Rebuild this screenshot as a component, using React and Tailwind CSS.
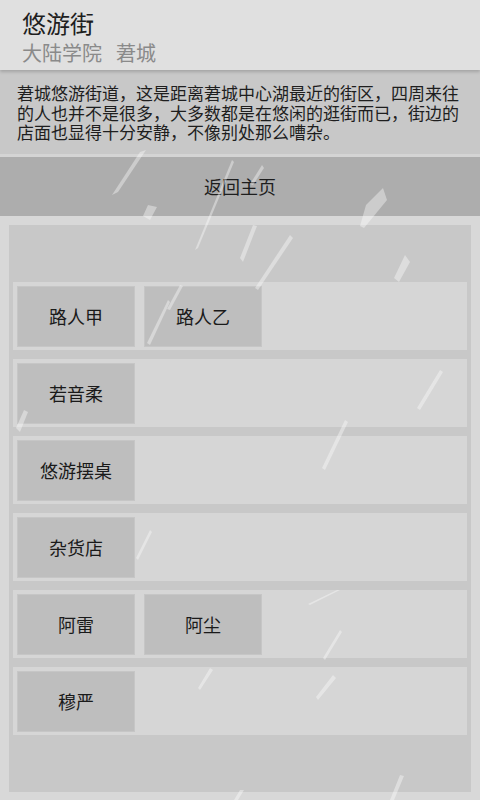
import React from "react";

const FONT = { fontFamily: '"Noto Sans CJK SC", "Noto Sans", sans-serif' };

const rows = [
  ["路人甲", "路人乙"],
  ["若音柔"],
  ["悠游摆桌"],
  ["杂货店"],
  ["阿雷", "阿尘"],
  ["穆严"],
];

const desc = [
  "莙城悠游街道，这是距离莙城中心湖最近的街区，四周来往",
  "的人也并不是很多，大多数都是在悠闲的逛街而已，街边的",
  "店面也显得十分安静，不像别处那么嘈杂。",
];

function Rain() {
  const streaks = [
    "M140,152 L146,150 L118,192 L112,195 Z",
    "M148,205 L157,207 L150,220 L143,216 Z",
    "M232,160 L234,162 L198,248 L195,250 Z",
    "M262,165 L264,168 L253,185 L250,184 Z",
    "M253,225 L257,226 L243,262 L240,258 Z",
    "M290,235 L293,238 L258,290 L255,288 Z",
    "M383,188 L387,200 L364,228 L360,226 L366,205 Z",
    "M405,255 L410,262 L399,282 L394,278 Z",
    "M364,0 L368,0 L358,8 L356,6 Z",
    "M475,8 L480,4 L480,14 L474,16 Z",
    "M168,300 L170,302 L150,345 L147,343 Z",
    "M180,285 L183,286 L170,310 L167,309 Z",
    "M440,370 L443,372 L420,410 L417,408 Z",
    "M345,420 L348,422 L325,470 L322,468 Z",
    "M24,410 L28,412 L20,432 L16,428 Z",
    "M150,530 L152,532 L138,560 L136,558 Z",
    "M337,590 L340,590 L310,605 L308,604 Z",
    "M340,630 L342,632 L325,660 L323,658 Z",
    "M333,675 L336,678 L318,700 L316,697 Z",
    "M210,668 L213,670 L200,690 L198,688 Z",
    "M240,790 L244,790 L238,800 L234,800 Z",
    "M400,775 L404,776 L394,800 L390,800 Z",
  ];
  return (
    <svg
      className="pointer-events-none absolute left-0 top-0"
      width="480"
      height="800"
      viewBox="0 0 480 800"
    >
      {streaks.map((d, i) => (
        <path key={i} d={d} fill="#ffffff" fillOpacity="0.38" />
      ))}
    </svg>
  );
}

export default function App() {
  return (
    <div
      className="relative flex h-[800px] w-[480px] flex-col overflow-hidden bg-[#d8d8d8]"
      style={FONT}
    >
      <div className="relative z-10 flex h-[70px] flex-col bg-[#e0e0e0] pl-[22px] pt-[9px] shadow-[0_2px_3px_rgba(0,0,0,0.18)]">
        <div className="text-[24px] leading-[28px] text-[#1e1e1e]">悠游街</div>
        <div className="mt-[4px] flex text-[20px] leading-[24px] text-[#8a8a8a]">
          <span>大陆学院</span>
          <span className="ml-[14px]">莙城</span>
        </div>
      </div>
      <div className="flex h-[84px] flex-col bg-[#c8c8c8] pl-[17px] pt-[13px] text-[17px] text-[#1e1e1e]">
        {desc.map((line) => (
          <div key={line} className="h-[19.5px] whitespace-nowrap leading-[19.5px]">
            {line}
          </div>
        ))}
      </div>
      <div className="h-[3px] bg-[#d4d4d4]" />
      <div className="flex h-[59px] items-center justify-center bg-[#adadad] text-[18px] text-[#1e1e1e]">
        返回主页
      </div>
      <div className="h-[9px] bg-[#d8d8d8]" />
      <div className="mx-[9px] flex h-[567px] flex-col justify-center gap-[9px] bg-[#c8c8c8] px-[4px]">
        {rows.map((row, i) => (
          <div
            key={i}
            className="flex h-[68px] gap-[9px] bg-[#d6d6d6] pb-[3px] pl-[4px] pt-[4px]"
          >
            {row.map((name) => (
              <div
                key={name}
                className="flex w-[118px] items-center justify-center border border-[#c6c6c6] bg-[#bebebe] text-[18px] text-[#1a1a1a]"
              >
                {name}
              </div>
            ))}
          </div>
        ))}
      </div>
      <Rain />
    </div>
  );
}
